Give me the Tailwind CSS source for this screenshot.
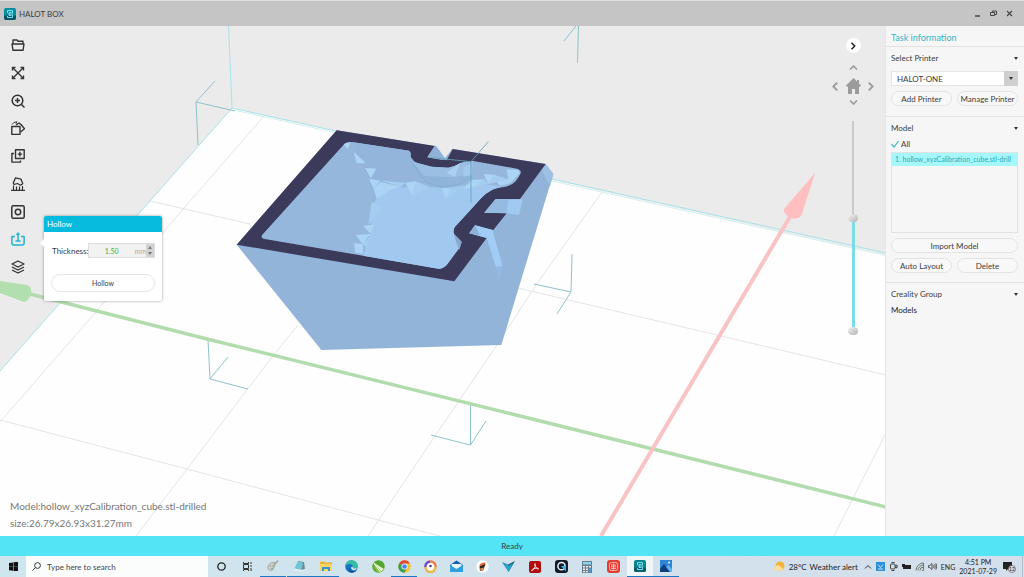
<!DOCTYPE html>
<html lang="en">
<head>
  <meta charset="UTF-8" />
  <meta name="viewport" content="width=device-width, initial-scale=1.0" />
  <title>HALOT BOX</title>
  <script src="https://cdn.jsdelivr.net/npm/@tailwindcss/browser@4"></script>
</head>
<body class="h-screen flex flex-col overflow-hidden bg-[#ebebeb] text-[8px] leading-3 text-[#3c3c3c] font-[Lato,sans-serif]">

  <!-- Title bar -->
  <header class="h-[26px] shrink-0 flex items-center justify-between pl-1 pr-[11px] bg-[#c5c5c5] border-t border-[#dedede]">
    <div class="flex items-center gap-[3px]">
      <svg class="size-3" viewBox="0 0 24 24" fill="none">
        <rect width="24" height="24" rx="4" fill="#0b8ba0" />
        <path d="M0 15h24v5a4 4 0 0 1-4 4H4a4 4 0 0 1-4-4z" fill="#0a5468" />
        <path d="M7 10V5h10v5l-2 2 2 2v5H7v-3" stroke="#6fe6f2" stroke-width="2" />
        <path d="M15 9h-5v6h5M10 12h4" stroke="#a5f4fa" stroke-width="1.500" />
      </svg>
      <h1>HALOT BOX</h1>
    </div>
    <div class="flex items-center gap-[9px]">
      <button type="button" aria-label="Minimize"><svg class="size-[7px]" viewBox="0 0 7 7"><path d="M1 6h5" stroke="#333" stroke-width="1.300" /></svg></button>
      <button type="button" aria-label="Restore"><svg class="size-[7px]" viewBox="0 0 7 7" fill="none" stroke="#444" stroke-width="1"><path d="M.5 2.500h4v3h-4zM2.500 2.500v-1.500h4v3.500h-2" /></svg></button>
      <button type="button" aria-label="Close"><svg class="size-[7px]" viewBox="0 0 7 7"><path d="M1 1l5 5M6 1L1 6" stroke="#444" stroke-width="1.100" /></svg></button>
    </div>
  </header>

  <div class="flex-1 min-h-0 flex">

    <!-- 3D viewport -->
    <main class="relative flex-1 min-w-0 overflow-hidden">
      <svg class="absolute inset-0 size-full" viewBox="0 26 886 510" preserveAspectRatio="xMinYMin slice">
        <path d="M232 108L886 255V536H0V371z" fill="#fefefe" />

        <!-- bed grid -->
        <g fill="none" stroke="#e6e4e5" stroke-width="1">
          <path d="M264 116L165 230L95 313L0 422" />
          <path d="M298 325L272 357L187 469L136 536" />
          <path d="M602 192L536 285L497 345L435 436L368 536" />
          <path d="M886 433L834 536" />
          <path d="M150 201L250 224M518 288L886 375" />
          <path d="M0 420L187 469L378 520L440 536" />
        </g>
        <g fill="none" stroke="#a9e2ea" stroke-width="1">
          <path d="M0 371L232 108L886 253" />
          <path d="M234 110L886 255.500" stroke="#d3eeee" />
          <path d="M228.500 26L232 108" />
        </g>

        <!-- model bounds -->
        <g fill="none" stroke="#8dc3c9" stroke-width="1">
          <path d="M215 81L196 102L235 111M196 102L198 145" />
          <path d="M564 41L576 26M578.500 26L577.500 63" />
          <path d="M208 340L210 379L228 357M210 379L248 389" />
          <path d="M572 254L571 292L534 284M571 292L557 314" />
        </g>

        <!-- axes -->
        <path d="M30 294L207 339L512 414L886 507" fill="none" stroke="#b3dcae" stroke-width="3.500" />
        <path d="M0 281L27 285Q32 287 31 293Q29 301 24 302L0 293z" fill="#b1dfaf" />
        <path d="M470.500 405V445L486 421M470 445L431 435" fill="none" stroke="#8dc3c9" />
        <path d="M601 536L791 215" stroke="#f9c3c5" stroke-width="4" />
        <path d="M815 173L802 214Q799 220 792 218Q783 215 784 209z" fill="#ffbfc0" />

        <!-- cut cube -->
        <g transform="translate(225 120) scale(.33333)">
          <path d="M35 374L335 31L962 132L985 162L829 675L289 690z" fill="#92b4d9" />
          <path d="M962 132L985 162L975 200L950 150z" fill="#9dbfe3" />
          <path d="M335 31L630 78L607 112L665 121L683 87L962 132L885 237H812L778 278L845 280L805 330L750 316L733 340L785 354L688 484L35 374z" fill="#3b3a5b" />
          <path d="M630 76L660 112L652 120L607 112z" fill="#8fb2d8" />
          <path d="M631 74L684 84L660 114z" fill="#ebebeb" />
          <path d="M360 70Q368 65 380 66L552 92Q560 95 557 110Q560 124 580 130L620 140L670 143Q690 140 705 130Q720 122 745 123L876 146Q890 150 887 160Q882 172 872 184Q860 197 838 201Q812 203 802 209Q782 219 768 235L730 277L690 320Q683 330 687 342L710 365L705 382L665 435Q654 447 640 446L115 356Q106 352 112 344z" fill="#96b7dc" />
          <path d="M455 235L480 205L580 200L660 205L760 190L830 200L802 209Q782 219 768 235L730 277L690 320Q683 330 687 342L705 380L665 435Q654 447 640 446L415 407L438 330L440 265z" fill="#a1c9f0" />
          <path d="M380 75L395 100L420 145L430 190L448 237L455 235L480 190L600 190L580 140L557 110L552 92L380 66z" fill="#93b5db" />
          <g fill="#acd5f5">
            <path d="M356 73L376 67L368 88z" />
            <path d="M386 95L423 130L395 130z" />
            <path d="M420 144L454 146L438 175z" />
            <path d="M432 176L466 182L445 205z" />
            <path d="M445 205L466 186L528 200L495 210L455 236z" />
            <path d="M541 188L574 184L562 228z" />
            <path d="M650 204L676 205L664 238z" />
            <path d="M740 180L778 178L748 200L715 208z" />
            <path d="M776 162L808 164L790 192z" />
            <path d="M845 148L880 150L884 160L856 190L825 197L810 180L850 178z" />
            <path d="M415 317L448 314L435 340z" />
            <path d="M392 345L436 342L413 372z" />
            <path d="M388 370L413 372L415 402L390 398z" />
          </g>
          <g fill="#a5cdf2">
            <path d="M562 228L574 184L614 202z" />
            <path d="M466 182L541 188L528 200z" />
            <path d="M440 245L472 262L430 315z" />
            <path d="M413 372L438 345L425 385z" />
            <path d="M664 238L676 205L700 208z" />
            <path d="M778 178L790 192L748 202z" />
            <path d="M808 164L850 178L790 192z" />
          </g>
          <path d="M557 122L580 130L620 140L670 143Q690 140 705 130L745 125L740 170L700 195L650 200L605 188L585 165z" fill="#9bbfe3" />
          <path d="M557 122L600 168L690 172L735 160L740 170L700 195L650 200L605 188L585 165z" fill="#8fb5da" />
          <path d="M665 158L705 130L690 170z" fill="#abd0f1" />
          <path d="M716 140L740 130L740 165L715 170z" fill="#a3c9ed" />
          <path d="M557 122L585 165L605 188L650 200L700 195L740 172" fill="none" stroke="#7fa8c8" stroke-width="2" />
          <path d="M687 342L710 365L703 390L692 362z" fill="#89a9cc" />
          <path d="M812 237L842 240L822 275L778 278z" fill="#8fb2d6" />
          <path d="M778 278L812 237L893 238L882 284L845 280z" fill="#96bbe1" />
          <path d="M850 240L893 238L882 284L845 280z" fill="#a0caf2" />
          <path d="M750 316L802 330L833 438L823 474L785 354L733 340z" fill="#a1ccf6" />
          <path d="M750 316L765 346L733 340z" fill="#8cb0d6" />
          <path d="M812 440L833 438L823 474z" fill="#91b9e2" />
          <path d="M790 65L738 125V248M738 125L610 112" fill="none" stroke="#64a2b4" stroke-width="2.500" />
        </g>
      </svg>

      <!-- Toolbar -->
      <nav class="absolute left-[11px] top-3 h-[236px] flex flex-col justify-between text-[#333]">
        <button type="button" aria-label="Open" class="size-[14px]"><svg class="size-full" viewBox="0 0 14 14" fill="none" stroke="currentColor" stroke-width="1.400" stroke-linejoin="round"><path d="M2 6V2h4l1 1.200h5V6M1 6h12l-1 6.300H2z" /></svg></button>
        <button type="button" aria-label="Fit" class="size-[14px]"><svg class="size-full" viewBox="0 0 14 14" fill="none" stroke="currentColor" stroke-width="1.400"><path d="M2 2l10 10M12 2L2 12" /><path d="M1.500 4.500v-3h3M9.500 1.500h3v3M12.500 9.500v3h-3M4.500 12.500h-3v-3" /></svg></button>
        <button type="button" aria-label="Zoom" class="size-[14px]"><svg class="size-full" viewBox="0 0 14 14" fill="none" stroke="currentColor" stroke-width="1.500"><circle cx="6.500" cy="6.500" r="5.300" /><path d="M6.500 4v5M4 6.500h5M10.500 10.500l3 3" /></svg></button>
        <button type="button" aria-label="Rotate" class="size-[14px]"><svg class="size-full" viewBox="0 0 14 14" fill="none" stroke="currentColor" stroke-width="1.400" stroke-linejoin="round"><path d="M.800 5.500h8.200v8H.800z" /><path d="M5 4l3-2 2 1.500 3.500 4.300L9.500 11" /><path d="M1 3.500Q2.500.800 6 .800L5 2.500" stroke-width="1" /></svg></button>
        <button type="button" aria-label="Clone" class="size-[14px]"><svg class="size-full" viewBox="0 0 14 14" fill="none" stroke="currentColor" stroke-width="1.400" stroke-linejoin="round"><path d="M4.500.800h8.700v8.700H4.500zM3 4.500H.900v8.600h8.600V11.500M8.900 2.800v4.600M6.600 5.100h4.600" /></svg></button>
        <button type="button" aria-label="Support" class="size-[14px]"><svg class="size-full" viewBox="0 0 14 14" fill="none" stroke="currentColor" stroke-width="1.300" stroke-linejoin="round"><path d="M4.500.800L10 2.200l1.800 4.600-2.300 1.400L6.500 6.500 3 7.500 2.300 6z" /><path d="M2.500 8.500V13M5.500 13V9.500M8.500 9.500V13M11.500 9v4M0 13.300h14" stroke-width="1.200" /></svg></button>
        <button type="button" aria-label="Drill" class="size-[14px]"><svg class="size-full" viewBox="0 0 14 14" fill="none" stroke="currentColor" stroke-width="1.500"><rect x=".8" y=".8" width="12.400" height="12.400" rx="1.500" /><circle cx="7" cy="7" r="2.700" /></svg></button>
        <button type="button" aria-label="Hollow" class="size-[14px] text-[#1fb6cf]"><svg class="size-full" viewBox="0 0 14 14" fill="none" stroke="currentColor" stroke-width="1.500" stroke-linejoin="round"><path d="M4 4.500H.900v7.300l1.300 1.300h9.600l1.300-1.300V4.500H10M7 .500v9M4.500 9h5M5.300 2.300h3.400" /></svg></button>
        <button type="button" aria-label="Slice" class="size-[14px]"><svg class="size-full" viewBox="0 0 14 14" fill="none" stroke="currentColor" stroke-width="1.300" stroke-linejoin="round"><path d="M7 1l6 3-6 3-6-3zM1 7l6 3 6-3M1 10l6 3 6-3" /></svg></button>
      </nav>

      <!-- Hollow settings -->
      <form class="absolute left-[44px] top-[190px] w-[118px] rounded-xs bg-white shadow-[0_0_3px_rgba(0,0,0,0.4)]">
        <span class="absolute -left-1 top-[23px] border-y-4 border-y-transparent border-r-4 border-r-white"></span>
        <h2 class="h-4 pl-[3px] leading-4 rounded-t-xs bg-[#06bbdd] text-white">Hollow</h2>
        <div class="px-[7px] pt-[11px] pb-[9px]">
          <div class="flex items-center">
            <label for="thickness" class="w-[37px] whitespace-nowrap pl-px">Thickness:</label>
            <div class="flex-1 h-[15px] flex items-center bg-[#f2f2f2] border border-[#dedede]">
              <input id="thickness" type="text" value="1.50" class="w-0 flex-1 text-center text-[7px] text-[#3cb43c] outline-none" />
              <span class="text-[7px] text-[#aaa]">mm</span>
              <span class="flex flex-col h-full w-2 bg-[#d2d2d2]">
                <button type="button" aria-label="Increase" class="flex-1 flex items-center justify-center"><svg class="w-1 h-[3px]" viewBox="0 0 4 3"><path d="M0 3l2-3 2 3z" fill="#777" /></svg></button>
                <button type="button" aria-label="Decrease" class="flex-1 flex items-center justify-center"><svg class="w-1 h-[3px]" viewBox="0 0 4 3"><path d="M0 0l2 3 2-3z" fill="#777" /></svg></button>
              </span>
            </div>
          </div>
          <button type="button" class="mt-4 w-full h-[18px] rounded-full border border-[#e6e6e6] text-[7px] leading-4">Hollow</button>
        </div>
      </form>

      <!-- View controls -->
      <div class="absolute right-[11px] top-3 w-[42px] flex flex-col items-center text-[#9b9b9b]">
        <button type="button" aria-label="Hide panel" class="size-[15px] rounded-full bg-white flex items-center justify-center text-[#222]"><svg class="size-2" viewBox="0 0 8 8" fill="none" stroke="currentColor" stroke-width="1.500"><path d="M2.500.800L5.700 4 2.500 7.200" /></svg></button>
        <button type="button" aria-label="Up" class="mt-3"><svg class="w-[9px] h-[5px]" viewBox="0 0 8 5" fill="none" stroke="currentColor" stroke-width="1.600"><path d="M.500 4.500L4 1l3.500 3.500" /></svg></button>
        <div class="mt-2 w-full flex items-center justify-between">
          <button type="button" aria-label="Left"><svg class="w-[6px] h-[9px]" viewBox="0 0 5 8" fill="none" stroke="currentColor" stroke-width="1.600"><path d="M4.500.500L1 4l3.500 3.500" /></svg></button>
          <button type="button" aria-label="Home"><svg class="w-[15px] h-4" viewBox="0 0 15 16" fill="currentColor"><path d="M7.500 0L11 3.500V2h2v3.500L15 7.500 14 9l-1-.700V16H9v-5H6v5H2V8.300L1 9 0 7.500z" /></svg></button>
          <button type="button" aria-label="Right"><svg class="w-[6px] h-[9px]" viewBox="0 0 5 8" fill="none" stroke="currentColor" stroke-width="1.600"><path d="M.500.500L4 4 .500 7.500" /></svg></button>
        </div>
        <button type="button" aria-label="Down" class="mt-[6px]"><svg class="w-[9px] h-[5px]" viewBox="0 0 8 5" fill="none" stroke="currentColor" stroke-width="1.600"><path d="M.500.500L4 4 7.500.500" /></svg></button>
        <!-- clipping range -->
        <div class="relative mt-3 w-[10px] h-[218px]">
          <div class="absolute left-1 top-1 bottom-1 w-[2px] bg-[#c9c9c9]"></div>
          <div class="absolute left-1 bottom-1 w-[3px] bg-[#7bdbe6]" style="height: 113px"></div>
          <input type="range" aria-label="Upper layer" min="0" max="100" value="54" class="absolute inset-0 w-[10px] h-full appearance-none bg-transparent pointer-events-none [writing-mode:vertical-lr] [direction:rtl] [&::-webkit-slider-thumb]:pointer-events-auto [&::-webkit-slider-thumb]:appearance-none [&::-webkit-slider-thumb]:w-[10px] [&::-webkit-slider-thumb]:h-2 [&::-webkit-slider-thumb]:rounded-full [&::-webkit-slider-thumb]:bg-linear-to-br [&::-webkit-slider-thumb]:from-[#f4f4f4] [&::-webkit-slider-thumb]:to-[#b4b4b4]" />
          <input type="range" aria-label="Lower layer" min="0" max="100" value="0" class="absolute inset-0 w-[10px] h-full appearance-none bg-transparent pointer-events-none [writing-mode:vertical-lr] [direction:rtl] [&::-webkit-slider-thumb]:pointer-events-auto [&::-webkit-slider-thumb]:appearance-none [&::-webkit-slider-thumb]:w-[10px] [&::-webkit-slider-thumb]:h-2 [&::-webkit-slider-thumb]:rounded-full [&::-webkit-slider-thumb]:bg-linear-to-br [&::-webkit-slider-thumb]:from-[#f4f4f4] [&::-webkit-slider-thumb]:to-[#b4b4b4]" />
        </div>
      </div>

      <div class="absolute left-[10px] bottom-1 text-[10px] leading-[17px] text-[#777]">
        <p>Model:hollow_xyzCalibration_cube.stl-drilled</p>
        <p>size:26.79x26.93x31.27mm</p>
      </div>
    </main>

    <!-- Task panel -->
    <aside class="w-[139px] shrink-0 bg-[#f6f6f6] border-l border-[#e6e6e6]">
      <h2 class="h-[21px] pl-[5px] text-[9px] leading-[23px] text-[#35b3c6] border-b border-[#e2e2e2]">Task information</h2>

      <section class="pl-[5px] pr-[6px] pt-[5px] pb-[10px] border-b border-[#e2e2e2]">
        <div class="flex items-center justify-between">
          <label for="printer">Select Printer</label>
          <svg class="w-1 h-[3px]" viewBox="0 0 4 3"><path d="M0 0h4L2 3z" fill="#333" /></svg>
        </div>
        <div class="relative mt-[7px]">
          <select id="printer" class="block w-full h-[15px] pl-[5px] appearance-none bg-white border border-[#e4e4e4]">
            <option>HALOT-ONE</option>
          </select>
          <span class="absolute right-0 inset-y-0 w-[14px] flex items-center justify-center bg-[#cfcfcf] pointer-events-none"><svg class="w-1 h-[3px]" viewBox="0 0 4 3"><path d="M0 0h4L2 3z" fill="#333" /></svg></span>
        </div>
        <div class="mt-[5px] grid grid-cols-2 gap-[5px]">
          <button type="button" class="h-[15px] whitespace-nowrap rounded-full border border-[#e2e2e2] bg-[#f8f8f8]">Add Printer</button>
          <button type="button" class="h-[15px] whitespace-nowrap rounded-full border border-[#e2e2e2] bg-[#f8f8f8]">Manage Printer</button>
        </div>
      </section>

      <section class="pl-[5px] pr-[6px] pt-[5px] pb-[9px] border-b border-[#e2e2e2]">
        <div class="flex items-center justify-between">
          <h3>Model</h3>
          <svg class="w-1 h-[3px]" viewBox="0 0 4 3"><path d="M0 0h4L2 3z" fill="#333" /></svg>
        </div>
        <label class="mt-1 flex items-center gap-[2px]">
          <span class="relative size-2">
            <input type="checkbox" checked class="peer block size-2 appearance-none" />
            <svg class="absolute inset-0 hidden peer-checked:block pointer-events-none" viewBox="0 0 8 8" fill="none" stroke="#3bb8c6" stroke-width="1.200"><path d="M.500 4L3 7 7.500 1" /></svg>
          </span>
          All
        </label>
        <ul class="mt-[2px] h-[81px] border border-[#e2e2e2] overflow-hidden">
          <li class="pl-[3px] h-[13px] leading-[13px] overflow-hidden whitespace-nowrap bg-[#a6f7fa] text-[7px] text-[#2aa9ba]">1. hollow_xyzCalibration_cube.stl-drill</li>
        </ul>
        <button type="button" class="mt-[5px] w-full h-[15px] rounded-full border border-[#e2e2e2] bg-[#f8f8f8]">Import Model</button>
        <div class="mt-[5px] grid grid-cols-2 gap-[5px]">
          <button type="button" class="h-[15px] rounded-full border border-[#e2e2e2] bg-[#f8f8f8]">Auto Layout</button>
          <button type="button" class="h-[15px] rounded-full border border-[#e2e2e2] bg-[#f8f8f8]">Delete</button>
        </div>
      </section>

      <section class="pl-[5px] pr-[6px] pt-[5px]">
        <div class="flex items-center justify-between">
          <h3>Creality Group</h3>
          <svg class="w-1 h-[3px]" viewBox="0 0 4 3"><path d="M0 0h4L2 3z" fill="#333" /></svg>
        </div>
        <p class="mt-1 text-[#222]">Models</p>
      </section>
    </aside>
  </div>

  <div class="h-5 shrink-0 leading-5 text-center bg-[#53e4f6]">Ready</div>

  <!-- Windows taskbar -->
  <footer class="h-[21px] shrink-0 flex items-center bg-linear-to-r from-[#cfe6ef] to-[#d4dfeb] text-[#222]">
    <button type="button" aria-label="Start" class="w-[26px] flex justify-center"><svg class="size-[9px]" viewBox="0 0 9 9" fill="#111"><path d="M0 1l4-.600v4H0zM4.500.300L9-.300v4.700H4.500zM0 4.800h4v4L0 8.200zM4.500 4.800H9v4.700l-4.500-.600z" /></svg></button>
    <label class="w-[182px] h-full flex items-center gap-[6px] pl-[6px] bg-[#fbfdfd]">
      <svg class="size-[9px]" viewBox="0 0 9 9" fill="none" stroke="#333"><circle cx="5.500" cy="3.500" r="2.900" /><path d="M3.300 5.700L.400 8.600" /></svg>
      <input type="text" placeholder="Type here to search" class="flex-1 w-0 outline-none placeholder:text-[#444]" />
    </label>
    <div class="w-[471px] h-full flex justify-between">
      <button type="button" aria-label="Cortana" class="w-[26px] flex items-center justify-center"><svg class="size-[9px]" viewBox="0 0 9 9" fill="none" stroke="#222" stroke-width="1.300"><circle cx="4.500" cy="4.500" r="3.700" /></svg></button>
      <button type="button" aria-label="Task view" class="w-[26px] flex items-center justify-center"><svg class="size-[9px]" viewBox="0 0 9 9" fill="none" stroke="#333"><path d="M.500 2.500h5v4h-5zM.500 0v1.500h5V0M.500 9V7.500h5V9M8 0v2M8 3v2M8 6v3" /></svg></button>
      <button type="button" aria-label="Paint" class="w-[26px] border-b border-[#1c78c4] flex items-center justify-center"><svg class="size-3" viewBox="0 0 12 12"><path d="M1 6Q2 2 8 2.500L7 8Q6 11 3 10.500 0 9.500 1 6z" fill="#c9d0cc" stroke="#8c9792" stroke-width=".6" /><path d="M11 .500L5.500 7" stroke="#a9a58e" stroke-width="1.500" /><circle cx="3.500" cy="6" r=".7" fill="#b98a72" /><circle cx="5" cy="8.800" r=".7" fill="#4f9b6c" /></svg></button>
      <button type="button" aria-label="Notepad" class="w-[26px] border-b border-[#1c78c4] flex items-center justify-center"><svg class="size-3" viewBox="0 0 12 12"><path d="M4 1l6 1 1 7-3 2z" fill="#6f8b92" /><path d="M3.500 1.500L9 2.500 7.500 10 .500 8.500z" fill="#6fc5d8" /><path d="M.500 8.500L7.500 10l3.500-1-1 2-3 .500-6-1.500z" fill="#e8f1f3" /></svg></button>
      <button type="button" aria-label="File Explorer" class="w-[26px] border-b border-[#1c78c4] flex items-center justify-center"><svg class="size-3" viewBox="0 0 12 12"><path d="M0 1.500h4.500l1 1H12V11H0z" fill="#e5b53e" /><path d="M0 4h12v7H0z" fill="#fad564" /><path d="M2 11V7h8v4H8V9H4v2z" fill="#3b93d0" /></svg></button>
      <button type="button" aria-label="Edge" class="w-[26px] flex items-center justify-center"><svg class="size-[13px]" viewBox="0 0 13 13"><circle cx="6.500" cy="6.500" r="6.200" fill="#1673c5" /><path d="M.500 6Q1 .300 6.500.300q5.700.200 6.200 5.200 0 3-3.700 3-2-.200-1.200-1.800Q8 4 5 4 1.500 4 .500 6z" fill="#37bfa0" /><path d="M4.500 7.500Q4.500 11 9 11.200q2-.200 3-1.200-2 3-5.500 2.700Q3 12 4.500 7.500z" fill="#0d4c96" /><path d="M7.800 6.700Q7.200 8.500 9 8.500l3-.500-1.500 2q-4 1-4.500-2 0-1.500 1.800-1.300z" fill="#d5e7f2" /></svg></button>
      <button type="button" aria-label="CorelDRAW" class="w-[26px] flex items-center justify-center"><svg class="size-[13px]" viewBox="0 0 13 13"><circle cx="6.500" cy="6.500" r="6.200" fill="#55a630" /><path d="M1.500 2.500L12 9 8 12.500Q3 9 1.500 2.500z" fill="#e6f4d4" /><path d="M1.500 2.500L10 12 6 12.600Q2 9 1.500 2.500z" fill="#87c440" /><path d="M1.500 2.500l7 9.800" stroke="#f4fae9" stroke-width="1" /></svg></button>
      <button type="button" aria-label="Chrome" class="w-[26px] border-b border-[#1c78c4] flex items-center justify-center"><svg class="size-[13px]" viewBox="0 0 13 13"><circle cx="6.500" cy="6.500" r="6.200" fill="#f3c330" /><path d="M6.500 6.500L1.100 3.400A6.200 6.200 0 0 1 12 3.600H6.500z" fill="#dd4a3d" /><path d="M6.500 6.500L1.100 3.400A6.200 6.200 0 0 0 6.300 12.700L9 8z" fill="#35a255" /><circle cx="6.500" cy="6.500" r="3" fill="#fff" /><circle cx="6.500" cy="6.500" r="2.300" fill="#4583ea" /></svg></button>
      <button type="button" aria-label="Avast" class="w-[26px] flex items-center justify-center"><svg class="size-[13px]" viewBox="0 0 13 13" fill="none"><circle cx="6.500" cy="6.500" r="4.500" fill="#fff" /><path d="M1.500 7A5 5 0 0 1 6 1.500" stroke="#7449c6" stroke-width="2.500" /><path d="M6 1.500A5 5 0 0 1 11.500 7" stroke="#e87d50" stroke-width="2.500" /><path d="M11.500 7A5 5 0 0 1 1.500 7" stroke="#e9b64f" stroke-width="2.500" /><circle cx="6.500" cy="6" r="1.300" fill="#5b3c8c" /></svg></button>
      <button type="button" aria-label="Mail" class="w-[26px] flex items-center justify-center"><svg class="size-[13px]" viewBox="0 0 13 13"><path d="M0 5l6.500-4.500L13 5v7H0z" fill="#1160b0" /><path d="M1.500 4h10v5h-10z" fill="#e7f4fa" /><path d="M0 5l6.500 4L13 5v7H0z" fill="#319fdc" /></svg></button>
      <button type="button" aria-label="Sculpt" class="w-[26px] flex items-center justify-center"><svg class="size-[13px]" viewBox="0 0 13 13"><circle cx="6.500" cy="6.500" r="6.200" fill="#fff" /><path d="M3.500 5Q5 2 9.500 2.500L9 6 4 7.500z" fill="#e3692e" /><path d="M3.500 6.500l6-2.500-1.500 4-1 2.500-3 .500z" fill="#30231f" /><path d="M4 8.500l4-1L7 10.500l-2.500.500z" fill="#d88a57" /></svg></button>
      <button type="button" aria-label="Vectric" class="w-[26px] flex items-center justify-center"><svg class="size-[13px]" viewBox="0 0 13 13"><path d="M0 2l6 2.500L6.500 12z" fill="#2490bd" /><path d="M13 1L6 4.500 6.500 12z" fill="#155d84" /><path d="M2 3l4.500 3L11 3 6.500 12z" fill="#27a5cf" /></svg></button>
      <button type="button" aria-label="Acrobat" class="w-[26px] flex items-center justify-center"><svg class="size-3" viewBox="0 0 12 12"><rect width="12" height="12" rx="2" fill="#b40c0c" /><path d="M6 2.500Q7 5 5 8 3 10.500 2.500 9.500 3 8 6 7.300q3.500-.600 3.700.500-.700 1-2.700-1.300Q5.500 4.500 6 2.500z" fill="none" stroke="#fff" stroke-width=".8" /></svg></button>
      <button type="button" aria-label="QuickTime" class="w-[26px] flex items-center justify-center"><svg class="size-[13px]" viewBox="0 0 13 13"><rect width="13" height="13" rx="3" fill="#121b2b" /><circle cx="6.500" cy="6.200" r="3.600" fill="none" stroke="#e9f5fb" stroke-width="1.500" /><path d="M6 6l5 0v5.500z" fill="#38b4e6" /></svg></button>
      <button type="button" aria-label="Calculator" class="w-[26px] flex items-center justify-center"><svg class="w-[10px] h-3" viewBox="0 0 10 12"><path d="M0 0h10v12H0z" fill="#6b7c8c" /><path d="M1 1h8v2.500H1z" fill="#86d4ed" /><path d="M1 5h2v1.500H1zM4 5h2v1.500H4zM7 5h2v1.500H7zM1 7.500h2V9H1zM4 7.500h2V9H4zM1 10h2v1.300H1zM4 10h2v1.300H4z" fill="#edf2f5" /><path d="M7 7.500h2v3.800H7z" fill="#3e9bd8" /></svg></button>
      <button type="button" aria-label="Screen recorder" class="w-[26px] flex items-center justify-center"><svg class="size-[13px]" viewBox="0 0 13 13" fill="none"><rect width="13" height="13" rx="3" fill="#e53d33" /><rect x="2.500" y="2.500" width="8" height="8" rx="2" stroke="#ffb5aa" /><path d="M4 5h5M4 6.800h5M4 8.500h5M6.500 3.500v6" stroke="#ffd0c8" stroke-width=".8" /></svg></button>
      <button type="button" aria-label="HALOT BOX" class="w-[26px] border-b border-[#1c78c4] bg-[#eef6f8] flex items-center justify-center"><svg class="size-3" viewBox="0 0 24 24" fill="none"><rect width="24" height="24" rx="4" fill="#0b8591" /><path d="M0 15h24v5a4 4 0 0 1-4 4H4a4 4 0 0 1-4-4z" fill="#0a5d6a" /><path d="M7 10V5h10v5l-2 2 2 2v5H7v-3" stroke="#6fdfe5" stroke-width="2" /><path d="M15 9h-5v6h5M10 12h4" stroke="#a5f4fa" stroke-width="1.500" /></svg></button>
      <button type="button" aria-label="Photos" class="w-[26px] border-b border-[#1c78c4] flex items-center justify-center"><svg class="size-3" viewBox="0 0 12 12"><path d="M0 0h12v12H0z" fill="#2f86d8" /><path d="M0 9l4-5 7 8H0z" fill="#0d3f7c" /><path d="M6 7l2.500-2L12 9v3h-2z" fill="#5fb4ee" /><circle cx="9" cy="2.500" r="1" fill="#fff" /></svg></button>
    </div>

    <div class="ml-auto h-full flex items-center">
      <svg class="size-[11px]" viewBox="0 0 11 11"><circle cx="6" cy="5" r="4.500" fill="#f4b43a" /><path d="M1.500 9.500a2 2 0 0 1 .300-4Q3 3 5.500 4.500q1 .800.700 1.500 3 0 2.500 3.500z" fill="#f8dfa4" /></svg>
      <span class="ml-1">28°C</span>
      <span class="ml-[3px] whitespace-nowrap">Weather alert</span>
      <div class="ml-[6px] flex items-center gap-1">
        <svg class="size-2" viewBox="0 0 8 8" fill="none" stroke="#333"><path d="M1 5.500l3-3 3 3" /></svg>
        <svg class="size-[9px]" viewBox="0 0 9 9"><path d="M0 0h9v9H0z" fill="#2a8fd6" /><path d="M2 2.500l2.500 3L7 2.500M2 7h5" stroke="#c8e8fa" fill="none" /></svg>
        <svg class="size-[9px]" viewBox="0 0 9 9" fill="none" stroke="#333" stroke-width=".9"><rect x="1.500" y="2" width="4.500" height="5" rx="1" /><path d="M6 4l2-1v3L6 5M2.500.500h3M2.500 8.500h3" /></svg>
        <svg class="size-[9px]" viewBox="0 0 9 9"><path d="M2 3h7v4H2z" fill="#222" /><path d="M0 2h3v3H0zM1 5h1v2H1z" fill="#222" /></svg>
        <svg class="size-[9px]" viewBox="0 0 9 9" fill="none" stroke="#666" stroke-width=".9"><path d="M1 8.500A7.500 7.500 0 0 1 8.500 1M3 8.500A5.500 5.500 0 0 1 8.500 3M5 8.500A3.500 3.500 0 0 1 8.500 5M7 8.500h1.500V1" /></svg>
        <svg class="size-[9px]" viewBox="0 0 9 9" fill="none" stroke="#333" stroke-width=".8"><path d="M.500 3.500h1.300L4 1.500v6L1.800 5.500H.500zM5.300 3.300q.800 1.200 0 2.400M6.600 2.300q1.300 2.200 0 4.400M7.800 1.300q2 3.200 0 6.400" /></svg>
        <span class="text-[7px]">ENG</span>
      </div>
      <div class="ml-1 text-center text-[7px] leading-[9px]">
        <p>4:51 PM</p>
        <p>2021-07-29</p>
      </div>
      <svg class="ml-[6px] w-[13px] h-3" viewBox="0 0 13 12"><path d="M0 1h9v7H5L3 10V8H0z" fill="#222" /><circle cx="9" cy="8" r="3.600" fill="#d8dee4" stroke="#555" stroke-width=".6" /><text x="9" y="10" font-size="5" text-anchor="middle" fill="#222">12</text></svg>
      <span class="ml-[6px] mr-px h-full w-px bg-[#b4bfc9]"></span>
    </div>
  </footer>
</body>
</html>
